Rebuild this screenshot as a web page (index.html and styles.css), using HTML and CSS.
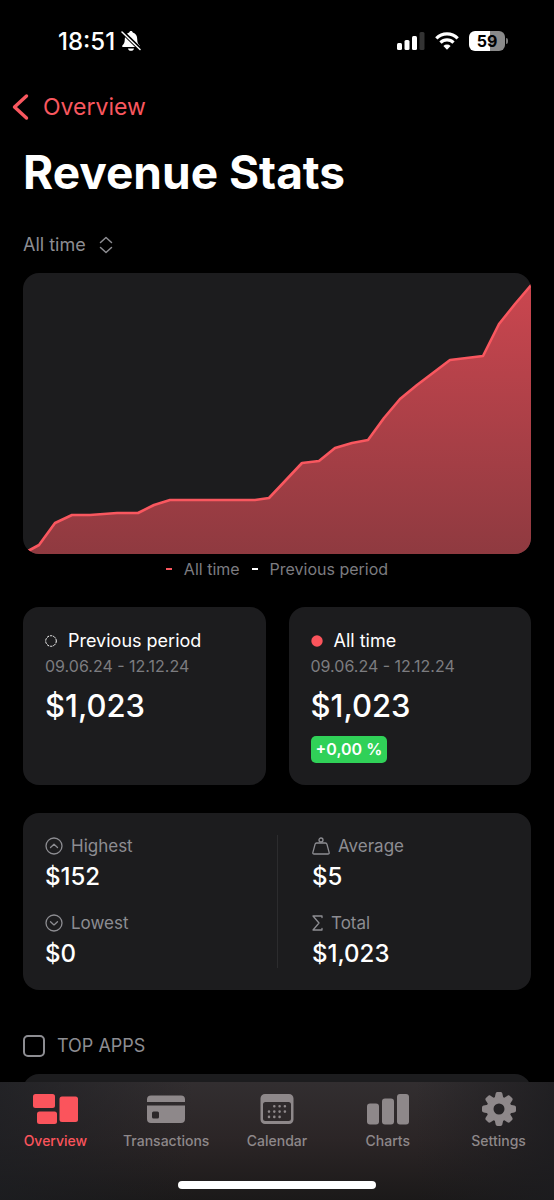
FILE: index.html
```html
<!DOCTYPE html>
<html lang="en">
<head>
<meta charset="utf-8">
<meta name="viewport" content="width=device-width, initial-scale=1">
<title>Revenue Stats</title>
<link rel="stylesheet" href="styles.css">
</head>
<body>
<div class="app">
  <div class="status-bar">
    <div class="status-time">
      <span>18:51</span>
      <svg width="20" height="22" viewBox="0 0 20 22" aria-label="Silent">
        <path fill="#fff" d="M10 1c1 0 1.600.6 1.800 1.500C14.900 3.300 16.200 6 16.200 9c0 3.500.8 5 2.400 6.500.6.7.3 1.500-.6 1.500H2c-.9 0-1.200-.8-.6-1.500C3 14 3.800 12.500 3.800 9c0-3 1.300-5.700 4.400-6.500C8.400 1.600 9 1 10 1zM7 18.500h6c-.2 1.500-1.400 2.300-3 2.300s-2.800-.8-3-2.300z"/>
        <path d="M0 .5 20 20" stroke="#000" stroke-width="4"/>
        <path d="M1 2 19 19.500" stroke="#fff" stroke-width="1.500" stroke-linecap="round"/>
      </svg>
    </div>
    <div class="status-icons">
      <svg width="28" height="18" viewBox="0 0 28 18" aria-label="Signal">
        <g fill="#fff"><rect y="11" width="5" height="7" rx="1.500"/><rect x="7.500" y="8" width="5" height="10" rx="1.500"/><rect x="15" y="4" width="5" height="14" rx="1.500"/></g>
        <rect x="22.500" width="5" height="18" rx="1.500" fill="#333"/>
      </svg>
      <svg width="24" height="18" viewBox="0 0 24 18" aria-label="Wi-Fi">
        <g fill="none" stroke="#fff" stroke-width="3.200"><path d="M1.300 6.300a15.200 15.200 0 0 1 21.400 0"/><path d="M5.500 10.600a9.200 9.200 0 0 1 13 0"/></g>
        <path fill="#fff" d="M8.400 14a5.100 5.100 0 0 1 7.200 0L12 17.700z"/>
      </svg>
      <div class="battery"><span class="battery-level">59</span><span class="battery-tip"></span></div>
    </div>
  </div>

  <main class="content">
    <a class="back" href="#overview">
      <svg width="18" height="28" viewBox="0 0 18 28" aria-hidden="true"><path d="M15.500 3 3.500 14l12 11" fill="none" stroke="currentColor" stroke-width="3.400" stroke-linecap="round" stroke-linejoin="round"/></svg>
      Overview
    </a>
    <h1 class="title">Revenue Stats</h1>

    <div class="range">
      <select class="range-select" aria-label="Period"><option>All time</option></select>
      <svg width="14" height="18" viewBox="0 0 14 18" aria-hidden="true"><path d="M1.500 6.500 7 1.500l5.500 5M1.500 11.500l5.500 5 5.500-5" fill="none" stroke="#8d8d92" stroke-width="1.500" stroke-linecap="round" stroke-linejoin="round"/></svg>
    </div>

    <div class="chart">
      <svg class="chart-plot" viewBox="0 0 508 281" preserveAspectRatio="none" role="img" aria-label="Revenue over all time">
        <defs><linearGradient id="fill" x1="0" y1="0" x2="0" y2="1"><stop offset="0" stop-color="#ca464f"/><stop offset="1" stop-color="#8f3a40"/></linearGradient></defs>
        <path fill="url(#fill)" d="M0 281 6 278 16 272 32 250 49 242 67 242 94 240 115 240 131 232 147 227 232 227 246 225 279 190 296 188 312 175 329 170 345 167 361 145 377 126 394 112 427 87 460 83 476 51 492 31 508 12V281z"/>
        <path fill="none" stroke="#f9575f" stroke-width="2.600" stroke-linejoin="round" d="M5 278 16 272 32 250 49 242 67 242 94 240 115 240 131 232 147 227 232 227 246 225 279 190 296 188 312 175 329 170 345 167 361 145 377 126 394 112 427 87 460 83 476 51 492 31 509 11"/>
      </svg>
    </div>
    <div class="legend">
      <span class="legend-item"><i class="dash dash-red"></i>All time</span>
      <span class="legend-item"><i class="dash"></i>Previous period</span>
    </div>

    <div class="periods">
      <section class="card period">
        <h2 class="period-name">
          <svg width="12" height="12" viewBox="0 0 12 12" aria-hidden="true"><circle cx="6" cy="6" r="5.300" fill="none" stroke="#fff" stroke-width="1" stroke-dasharray="2.400 .93"/></svg>
          Previous period
        </h2>
        <p class="period-dates">09.06.24 - 12.12.24</p>
        <p class="period-value">$1,023</p>
      </section>
      <section class="card period">
        <h2 class="period-name">
          <svg width="12" height="12" viewBox="0 0 12 12" aria-hidden="true"><circle cx="6" cy="6" r="5.700" fill="#fb545c"/></svg>
          All time
        </h2>
        <p class="period-dates">09.06.24 - 12.12.24</p>
        <p class="period-value">$1,023</p>
        <span class="badge">+0,00 %</span>
      </section>
    </div>

    <dl class="card stats">
      <div class="stats-column">
        <div>
          <dt class="stat-label"><svg width="18" height="18" viewBox="0 0 18 18" aria-hidden="true"><g fill="none" stroke="currentColor" stroke-width="1.300" stroke-linecap="round" stroke-linejoin="round"><circle cx="9" cy="9" r="8"/><path d="m5.500 10.500 3.500-3.200 3.500 3.200"/></g></svg>Highest</dt>
          <dd class="stat-value">$152</dd>
        </div>
        <div>
          <dt class="stat-label"><svg width="18" height="18" viewBox="0 0 18 18" aria-hidden="true"><g fill="none" stroke="currentColor" stroke-width="1.300" stroke-linecap="round" stroke-linejoin="round"><circle cx="9" cy="9" r="8"/><path d="m5.500 7.700 3.500 3.200 3.500-3.200"/></g></svg>Lowest</dt>
          <dd class="stat-value">$0</dd>
        </div>
      </div>
      <div class="stats-column stats-column-right">
        <div>
          <dt class="stat-label"><svg width="18" height="18" viewBox="0 0 18 18" aria-hidden="true"><g fill="none" stroke="currentColor" stroke-width="1.300" stroke-linejoin="round"><circle cx="9" cy="3" r="2"/><path d="M4.500 6h9c.8 0 1.200.4 1.400 1.100l2.200 8.200c.3 1.100-.2 1.700-1.200 1.700H2.100c-1 0-1.500-.6-1.200-1.700l2.200-8.200C3.300 6.400 3.700 6 4.500 6z"/></g></svg>Average</dt>
          <dd class="stat-value">$5</dd>
        </div>
        <div>
          <dt class="stat-label"><svg width="11" height="18" viewBox="0 0 11 18" aria-hidden="true"><path d="M10 3.500V2H1l6 7-6 7h9v-1.500" fill="none" stroke="currentColor" stroke-width="1.300" stroke-linecap="round" stroke-linejoin="round"/></svg>Total</dt>
          <dd class="stat-value">$1,023</dd>
        </div>
      </div>
    </dl>

    <label class="top-apps"><input class="top-apps-box" type="checkbox">TOP APPS</label>
    <div class="card next-card"></div>
  </main>

  <nav class="tab-bar">
    <div class="tabs">
      <a class="tab tab-active" href="#overview">
        <svg width="46" height="34" viewBox="0 0 46 34" aria-hidden="true"><g fill="currentColor"><rect x="1" y="2" width="22" height="14" rx="2.500"/><rect x="5" y="19.500" width="20" height="12.500" rx="2.500"/><rect x="27.500" y="4.500" width="18.500" height="25.500" rx="2.500"/></g></svg>
        Overview
      </a>
      <a class="tab" href="#transactions">
        <svg width="38" height="34" viewBox="0 0 38 34" aria-hidden="true"><path fill="currentColor" fill-rule="evenodd" d="M4 3.500h30a4 4 0 0 1 4 4v2.500H0V7.500a4 4 0 0 1 4-4zM0 13.500h38v13.500a4 4 0 0 1-4 4H4a4 4 0 0 1-4-4zM6.500 19.500A1.500 1.500 0 0 0 5 21v4a1.500 1.500 0 0 0 1.500 1.500h4A1.500 1.500 0 0 0 12 25v-4a1.500 1.500 0 0 0-1.500-1.500z"/></svg>
        Transactions
      </a>
      <a class="tab" href="#calendar">
        <svg width="34" height="34" viewBox="0 0 34 34" aria-hidden="true"><path fill="currentColor" fill-rule="evenodd" d="M5 2h24a4.500 4.500 0 0 1 4.500 4.500v21A4.500 4.500 0 0 1 29 32H5a4.500 4.500 0 0 1-4.500-4.500v-21A4.500 4.500 0 0 1 5 2zM5.500 10A2.500 2.500 0 0 0 3 12.500v14A2.500 2.500 0 0 0 5.500 29h23a2.500 2.500 0 0 0 2.500-2.500v-14a2.500 2.500 0 0 0-2.500-2.500z"/><g stroke="currentColor" stroke-width="2.600" stroke-linecap="round" stroke-dasharray="0 5.300"><path d="M14.300 14.300h11M9 19.600h16.200M9 24.900h11"/></g></svg>
        Calendar
      </a>
      <a class="tab" href="#charts">
        <svg width="42" height="34" viewBox="0 0 42 34" aria-hidden="true"><g fill="currentColor"><rect y="11.500" width="12" height="21" rx="3"/><rect x="15" y="6.500" width="12" height="26" rx="3"/><rect x="30" y="2" width="12" height="30.500" rx="3"/></g></svg>
        Charts
      </a>
      <a class="tab" href="#settings">
        <svg width="34" height="34" viewBox="0 0 34 34" aria-hidden="true"><g fill="currentColor"><path fill-rule="evenodd" d="M17 4.500a12.500 12.500 0 1 0 0 25 12.500 12.500 0 0 0 0-25zm0 7a5.500 5.500 0 1 1 0 11 5.500 5.500 0 0 1 0-11z"/><path id="cog" d="m12.500 7 1.100-5.300C13.900.6 14.500 0 15.500 0h3c1 0 1.600.6 1.900 1.700L21.500 7z"/><use href="#cog" transform="rotate(45 17 17)"/><use href="#cog" transform="rotate(90 17 17)"/><use href="#cog" transform="rotate(135 17 17)"/><use href="#cog" transform="rotate(180 17 17)"/><use href="#cog" transform="rotate(225 17 17)"/><use href="#cog" transform="rotate(270 17 17)"/><use href="#cog" transform="rotate(315 17 17)"/></g></svg>
        Settings
      </a>
    </div>
    <div class="home-indicator"></div>
  </nav>
</div>
</body>
</html>
```
FILE: styles.css
```css
* {
  box-sizing: border-box;
}

body {
  margin: 0;
  background: #000;
  color: #fff;
  font-family: Inter, "Liberation Sans", sans-serif;
}

h1, h2, p, dl, dd {
  margin: 0;
}

svg {
  display: block;
  flex-shrink: 0;
}

.app {
  display: flex;
  flex-direction: column;
  height: 100vh;
  overflow: hidden;
}

.status-bar {
  display: flex;
  flex-shrink: 0;
  align-items: center;
  justify-content: space-between;
  height: 82px;
  padding: 0 46px 0 58px;
}

.status-time {
  display: flex;
  align-items: center;
  gap: 6px;
  font-size: 24px;
  font-weight: 500;
}

.status-icons {
  display: flex;
  align-items: center;
  gap: 10px;
}

.battery {
  display: flex;
  align-items: center;
  gap: 1px;
}

.battery-level {
  width: 36px;
  border-radius: 6px;
  background: linear-gradient(90deg, #fff 59%, #8a8a8a 59%);
  color: #000;
  font-size: 16px;
  font-weight: 700;
  line-height: 20px;
  text-align: center;
}

.battery-tip {
  width: 2px;
  height: 6px;
  border-radius: 0 2px 2px 0;
  background: #777;
}

.content {
  display: flex;
  flex: 1;
  flex-direction: column;
  min-height: 0;
  padding: 0 23px;
  overflow: hidden;
}

.content > * {
  flex-shrink: 0;
}

.back {
  display: flex;
  align-items: center;
  align-self: flex-start;
  gap: 14px;
  height: 50px;
  margin-left: -12px;
  color: #f9575f;
  font-size: 23px;
  text-decoration: none;
}

.title {
  margin-top: 12px;
  font-size: 46px;
  font-weight: 700;
  line-height: 56px;
}

.range {
  display: flex;
  align-items: center;
  gap: 13px;
  margin: 33px 0 16px;
}

.range-select {
  appearance: none;
  padding: 0;
  border: 0;
  background: none;
  color: #8d8d92;
  font-family: inherit;
  font-size: 18px;
  line-height: 24px;
}

.chart {
  overflow: hidden;
  border-radius: 16px;
  background: #1c1c1e;
}

.chart-plot {
  width: 100%;
  height: 281px;
}

.legend {
  display: flex;
  justify-content: center;
  gap: 12px;
  padding: 5px 0;
  color: #7c7c80;
  font-size: 16px;
  line-height: 20px;
}

.legend-item {
  display: flex;
  align-items: center;
  gap: 12px;
}

.dash {
  width: 6px;
  height: 2px;
  background: #fff;
}

.dash-red {
  background: #f9575f;
}

.card {
  border-radius: 16px;
  background: #1c1c1e;
}

.periods {
  display: grid;
  grid-template-columns: 1fr 1fr;
  gap: 23px;
  margin-top: 23px;
}

.period {
  padding: 22px;
}

.period-name {
  display: flex;
  align-items: center;
  gap: 11px;
  font-size: 18px;
  font-weight: 400;
  line-height: 24px;
}

.period-dates {
  margin-top: 3px;
  color: #7c7c80;
  font-size: 16px;
  line-height: 20px;
}

.period-value {
  margin-top: 12px;
  font-size: 31px;
  font-weight: 500;
  line-height: 36px;
}

.badge {
  display: inline-block;
  margin-top: 12px;
  padding: 0 5px;
  border-radius: 5px;
  background: #30d158;
  font-size: 16px;
  font-weight: 600;
  line-height: 27px;
}

.stats {
  display: grid;
  grid-template-columns: 1fr 1fr;
  margin-top: 28px;
  padding: 22px;
}

.stats-column {
  display: grid;
  gap: 21px;
}

.stats-column-right {
  padding-left: 34px;
  border-left: 1px solid #2c2c2e;
}

.stat-label {
  display: flex;
  align-items: center;
  gap: 8px;
  color: #8d8d92;
  font-size: 17px;
  line-height: 22px;
}

.stat-value {
  margin-top: 5px;
  font-size: 24px;
  font-weight: 500;
  line-height: 29px;
}

.top-apps {
  display: flex;
  align-items: center;
  gap: 12px;
  margin-top: 44px;
  color: #8d8d92;
  font-size: 18px;
  line-height: 24px;
}

.top-apps-box {
  width: 22px;
  height: 22px;
  margin: 0;
  appearance: none;
  border: 2px solid #8d8d92;
  border-radius: 5px;
}

.next-card {
  height: 120px;
  margin-top: 16px;
}

.tab-bar {
  display: flex;
  flex-direction: column;
  flex-shrink: 0;
  align-items: center;
  justify-content: space-between;
  height: 118px;
  padding: 10px 0 11px;
  background:
    linear-gradient(90deg, rgba(28, 30, 34, .7), transparent 35%, transparent 75%, rgba(28, 28, 31, .8)),
    linear-gradient(#322e30, #2b2526 50%, #1b1919);
}

.tabs {
  display: grid;
  grid-template-columns: repeat(5, 1fr);
  width: 100%;
}

.tab {
  display: flex;
  flex-direction: column;
  align-items: center;
  gap: 6px;
  color: #8e888a;
  font-size: 14px;
  font-weight: 500;
  line-height: 18px;
  text-decoration: none;
}

.tab-active {
  color: #fb545c;
}

.home-indicator {
  width: 198px;
  height: 8px;
  border-radius: 4px;
  background: #fff;
}
```
